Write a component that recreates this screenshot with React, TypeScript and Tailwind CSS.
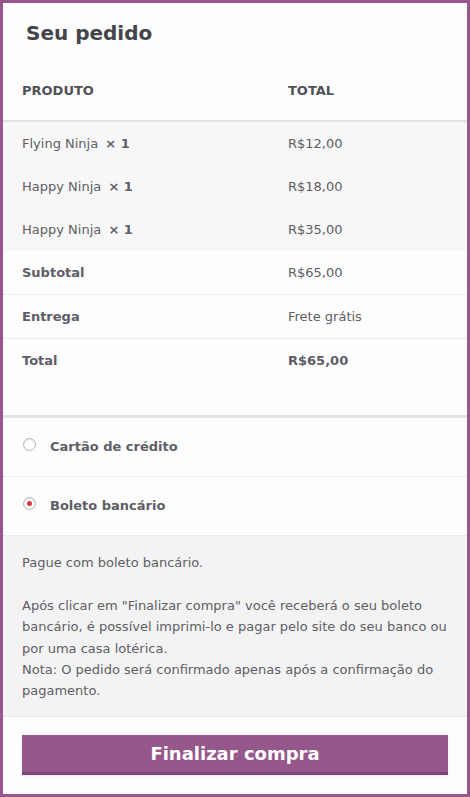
const items = [
  { name: "Flying Ninja", qty: 1, price: "R$12,00" },
  { name: "Happy Ninja", qty: 1, price: "R$18,00" },
  { name: "Happy Ninja", qty: 1, price: "R$35,00" },
];

const Radio = ({ checked }: { checked?: boolean }) => (
  <span className="flex h-[13px] w-[13px] items-center justify-center rounded-full border border-[#b4b4b4] bg-white shadow-[inset_0_1px_2px_rgba(0,0,0,0.12)]">
    {checked && <span className="h-[5px] w-[5px] rounded-full bg-[#d63a3a]" />}
  </span>
);

export default function App() {
  return (
    <div
      className="h-[797px] w-[470px] border-[3px] border-[#96588a] bg-[#fdfdfd] text-[13px] text-[#5e5e66]"
      style={{ fontFamily: '"DejaVu Sans", sans-serif' }}
    >
      <h3 className="px-[23px] pt-[17px] text-[20px] font-bold leading-[26px] text-[#43454b]">Seu pedido</h3>

      {/* order table */}
      <div className="mt-[15px]">
        <div className="grid h-[61px] grid-cols-[266px_1fr] items-center px-[19px] border-b-[2px] border-[#e2e2e2] font-bold text-[#515158]">
          <span>PRODUTO</span>
          <span>TOTAL</span>
        </div>
        {items.map((it, i) => (
          <div key={i} className="grid h-[43px] grid-cols-[266px_1fr] items-center bg-[#f7f7f7] px-[19px] last:border-b last:border-dotted last:border-[#dcdcdc]">
            <span>
              {it.name} <span className="ml-[3px] font-bold">× {it.qty}</span>
            </span>
            <span>{it.price}</span>
          </div>
        ))}
        <div className="grid h-[44px] grid-cols-[266px_1fr] items-center border-b border-dotted border-[#dcdcdc] px-[19px]">
          <span className="font-bold">Subtotal</span>
          <span>R$65,00</span>
        </div>
        <div className="grid h-[44px] grid-cols-[266px_1fr] items-center border-b border-dotted border-[#dcdcdc] px-[19px]">
          <span className="font-bold">Entrega</span>
          <span>Frete grátis</span>
        </div>
        <div className="grid h-[43px] grid-cols-[266px_1fr] items-center px-[19px] font-bold">
          <span>Total</span>
          <span>R$65,00</span>
        </div>
      </div>

      {/* payment */}
      <div className="mt-[33px] border-t-[3px] border-[#e2e2e2]">
        <label className="flex h-[59px] items-center gap-[14px] border-b border-dotted border-[#dcdcdc] px-[20px] font-bold">
          <span className="-mt-[6px]"><Radio /></span>
          <span>Cartão de crédito</span>
        </label>
        <label className="flex h-[59px] items-center gap-[14px] border-b border-dotted border-[#dcdcdc] px-[20px] font-bold">
          <span className="-mt-[6px]"><Radio checked /></span>
          <span>Boleto bancário</span>
        </label>
        <div className="border-b border-dotted border-[#dcdcdc] bg-[#f3f3f3] px-[19px] pt-[16px] pb-[14px] leading-[21.4px]">
          <p>Pague com boleto bancário.</p>
          <p className="mt-[21.4px]">
            Após clicar em "Finalizar compra" você receberá o seu boleto bancário, é possível imprimi-lo e pagar pelo site do seu banco ou por uma casa lotérica.
            <br />
            Nota: O pedido será confirmado apenas após a confirmação do pagamento.
          </p>
        </div>
        <div className="px-[19px] pt-[18px]">
          <button className="h-[40px] w-full border-b-[3px] border-[#7c4572] bg-[#96588a] text-[18px] font-bold text-white shadow-[0_1px_2px_rgba(0,0,0,0.08)]">
            Finalizar compra
          </button>
        </div>
      </div>
    </div>
  );
}
